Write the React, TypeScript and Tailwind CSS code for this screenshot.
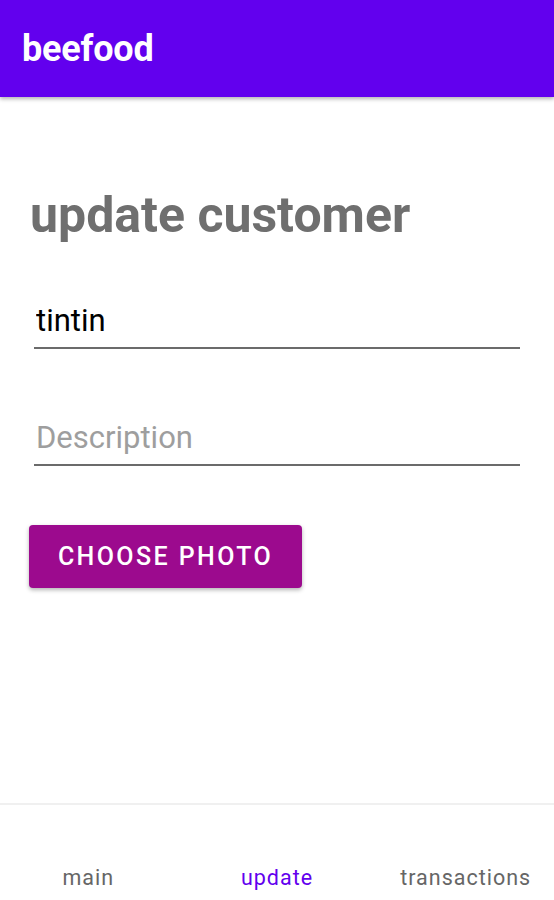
import React, { useState } from 'react';

const tabs = ['main', 'update', 'transactions'];

const App = () => {
  const [name, setName] = useState('tintin');
  const [description, setDescription] = useState('');
  const active = 'update';

  return (
    <div className="h-[900px] w-full flex flex-col bg-white overflow-hidden font-['Roboto',sans-serif]">
      <header className="h-[97px] shrink-0 bg-[#6200EE] flex items-center px-[22px] shadow-[0_2px_4px_rgba(0,0,0,0.3)] z-10">
        <h1 className="text-white text-[36px] font-bold tracking-[-0.2px]">beefood</h1>
      </header>

      <main className="flex-1 px-[30px] pt-[93px]">
        <h2 className="text-[50px] leading-none font-bold text-[#6f6f6f]">update customer</h2>

        <div className="mt-[62px] ml-[4px] mr-[4px] flex flex-col gap-[70px]">
          <input
            value={name}
            onChange={(e) => setName(e.target.value)}
            className="w-full text-[31px] leading-none pl-[2px] pb-[8px] text-black border-b-2 border-[#6b6b6b] outline-none bg-transparent"
          />
          <input
            value={description}
            placeholder="Description"
            onChange={(e) => setDescription(e.target.value)}
            className="w-full text-[31px] leading-none pl-[2px] pb-[8px] text-black placeholder:text-[#9e9e9e] border-b-2 border-[#6b6b6b] outline-none bg-transparent"
          />
        </div>

        <button className="mt-[59px] -ml-[1px] h-[63px] w-[273px] rounded-[4px] bg-[#9C0A8E] text-white text-[25px] font-medium tracking-[2.4px] uppercase shadow-[0_2px_4px_rgba(0,0,0,0.3)]">
          Choose photo
        </button>
      </main>

      <nav className="h-[97px] shrink-0 flex border-t-2 border-[#f0f0f0]">
        <div className="flex-1 flex -mx-[6px]">
          {tabs.map((tab) => (
            <div key={tab} className="flex-1 flex items-end justify-center pb-[6px]">
              <span
                className={
                  tab === active
                    ? 'text-[21.5px] tracking-[1px] text-[#6200EE]'
                    : 'text-[21.5px] tracking-[1px] text-[#666666]'
                }
              >
                {tab}
              </span>
            </div>
          ))}
        </div>
      </nav>
    </div>
  );
};

export default App;
